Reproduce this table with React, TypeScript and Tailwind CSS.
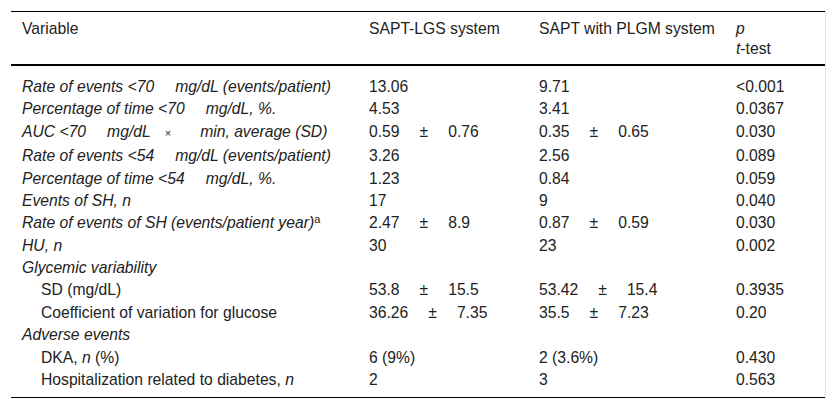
import type { ReactNode } from 'react';

type Row = {
  label: ReactNode;
  a?: ReactNode;
  b?: ReactNode;
  p?: string;
  indent?: boolean;
};

// wide gap used between the value and the unit in the source table
function Gap({ w = 21 }: { w?: number }) {
  return <span className="inline-block" style={{ width: w }} />;
}

function PM({ a, b }: { a: string; b: string }) {
  return (
    <span>
      {a}
      <span className="mx-[20px]">±</span>
      {b}
    </span>
  );
}

const ROWS: Row[] = [
  {
    label: (
      <i>
        Rate of events &lt;70<Gap />mg/dL (events/patient)
      </i>
    ),
    a: '13.06',
    b: '9.71',
    p: '<0.001',
  },
  {
    label: (
      <i>
        Percentage of time &lt;70<Gap />mg/dL, %.
      </i>
    ),
    a: '4.53',
    b: '3.41',
    p: '0.0367',
  },
  {
    label: (
      <i>
        AUC &lt;70<Gap />mg/dL<Gap w={14} />
        <span className="text-[11px] not-italic">×</span>
        <Gap w={29} />
        min, average (SD)
      </i>
    ),
    a: <PM a="0.59" b="0.76" />,
    b: <PM a="0.35" b="0.65" />,
    p: '0.030',
  },
  {
    label: (
      <i>
        Rate of events &lt;54<Gap />mg/dL (events/patient)
      </i>
    ),
    a: '3.26',
    b: '2.56',
    p: '0.089',
  },
  {
    label: (
      <i>
        Percentage of time &lt;54<Gap />mg/dL, %.
      </i>
    ),
    a: '1.23',
    b: '0.84',
    p: '0.059',
  },
  { label: <i>Events of SH, n</i>, a: '17', b: '9', p: '0.040' },
  {
    label: (
      <i>
        Rate of events of SH (events/patient year)
        <span className="relative -top-[5px] not-italic text-[11px] leading-none">a</span>
      </i>
    ),
    a: <PM a="2.47" b="8.9" />,
    b: <PM a="0.87" b="0.59" />,
    p: '0.030',
  },
  { label: <i>HU, n</i>, a: '30', b: '23', p: '0.002' },
  { label: <i>Glycemic variability</i> },
  { label: 'SD (mg/dL)', indent: true, a: <PM a="53.8" b="15.5" />, b: <PM a="53.42" b="15.4" />, p: '0.3935' },
  {
    label: 'Coefficient of variation for glucose',
    indent: true,
    a: <PM a="36.26" b="7.35" />,
    b: <PM a="35.5" b="7.23" />,
    p: '0.20',
  },
  { label: <i>Adverse events</i> },
  {
    label: (
      <>
        DKA, <i>n</i> (%)
      </>
    ),
    indent: true,
    a: '6 (9%)',
    b: '2 (3.6%)',
    p: '0.430',
  },
  {
    label: (
      <>
        Hospitalization related to diabetes, <i>n</i>
      </>
    ),
    indent: true,
    a: '2',
    b: '3',
    p: '0.563',
  },
];

const TH = 'text-left font-normal pl-[11px] pt-[7px] pb-[6px] border-t border-b-2 border-black';

export default function App() {
  return (
    <div
      className="w-[836px] h-[409px] bg-white pl-[11px] pt-[11px] text-[15.7px] text-[#222]"
      style={{ fontFamily: '"Liberation Sans", Arial, sans-serif' }}
    >
      <div className="w-[815px] border-r border-[#e6e6e6]">
        <table className="w-[814px] border-collapse table-fixed">
          <colgroup>
            <col className="w-[347px]" />
            <col className="w-[170px]" />
            <col className="w-[197px]" />
            <col className="w-[100px]" />
          </colgroup>
          <thead>
            <tr className="align-top leading-[19.5px]">
              <th className={TH}>Variable</th>
              <th className={TH}>SAPT-LGS system</th>
              <th className={TH}>SAPT with PLGM system</th>
              <th className={TH}>
                <i>p</i>
                <br />
                <i>t</i>-test
              </th>
            </tr>
          </thead>
          <tbody>
            {ROWS.map((r, i) => {
              const first = i === 0;
              const last = i === ROWS.length - 1;
              const py = `${first ? 'pt-[11px]' : 'pt-[1.7px]'} ${last ? 'pb-[8px] border-b border-black' : 'pb-[1.7px]'}`;
              return (
                <tr key={i} className="leading-[19px] align-top">
                  <td className={`${r.indent ? 'pl-[30px]' : 'pl-[11px]'} ${py} whitespace-nowrap`}>{r.label}</td>
                  <td className={`pl-[11px] ${py} whitespace-nowrap`}>{r.a}</td>
                  <td className={`pl-[11px] ${py} whitespace-nowrap`}>{r.b}</td>
                  <td className={`pl-[11px] ${py} whitespace-nowrap`}>{r.p}</td>
                </tr>
              );
            })}
          </tbody>
        </table>
      </div>
    </div>
  );
}
